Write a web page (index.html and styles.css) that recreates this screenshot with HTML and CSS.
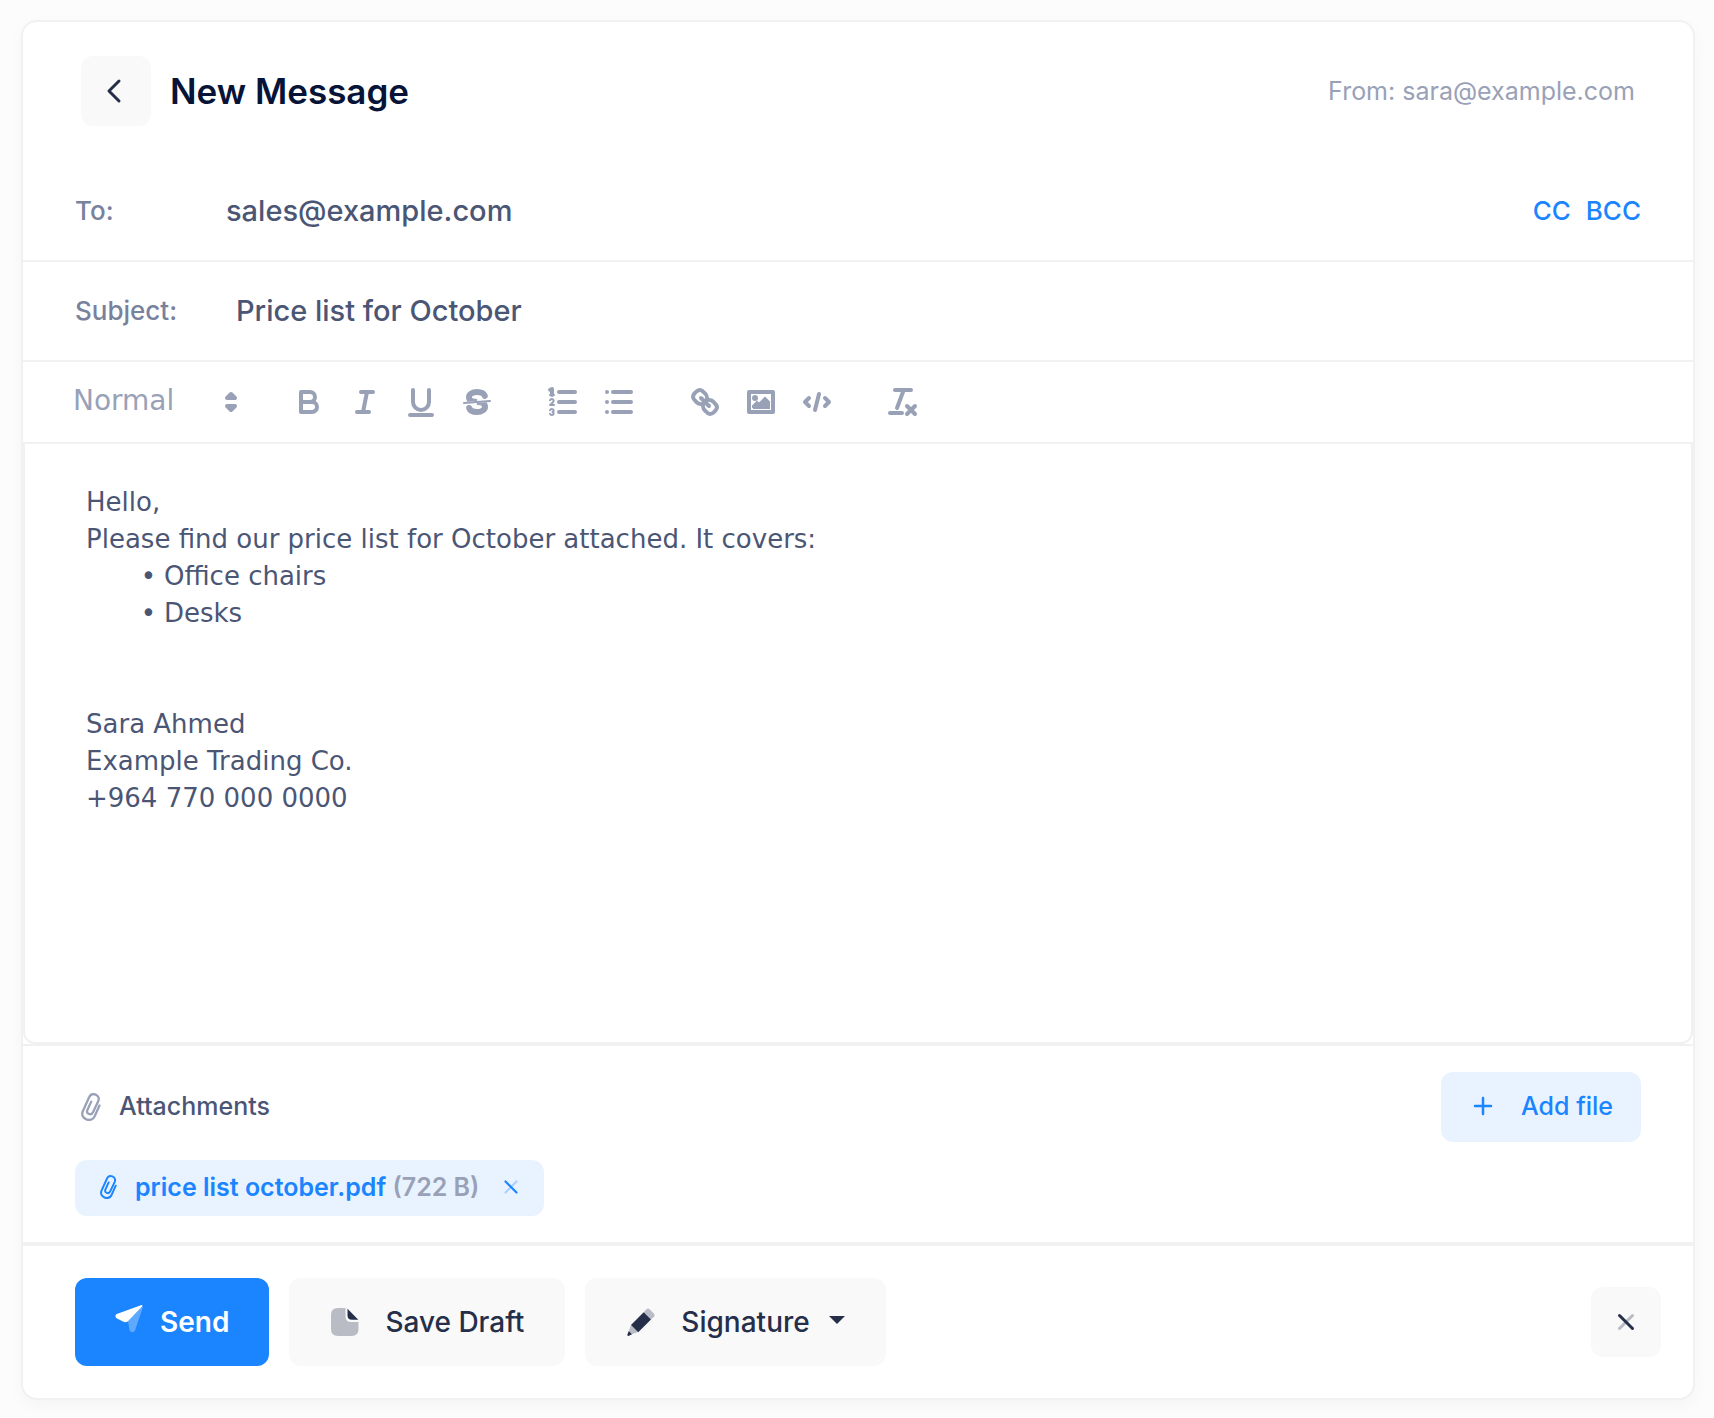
FILE: index.html
```html
<!DOCTYPE html>
<html lang="en">
<head>
<meta charset="utf-8">
<title>New Message</title>
<meta name="viewport" content="width=device-width, initial-scale=1">
<link rel="stylesheet" href="styles.css">
</head>
<body>
<svg class="sprite" aria-hidden="true">
  <symbol id="clip" viewBox="0 0 20 28">
    <g fill="none" stroke="currentColor" stroke-width="2.300" stroke-linecap="round" stroke-linejoin="round">
      <path d="M18.500 12.500 L13.800 23 C12.400 26.200 9 27.600 5.400 26.400 C1.600 25 .4 21.600 1.800 18.200 L8 4.600 C9.200 1.600 11.800 .5 14.600 1.600 C17.600 2.800 18.400 5.400 17.200 8.200 L12 19.200 C11.200 21 9.600 21.600 8 21 C6.200 20.300 5.600 18.900 6.300 17.200 L10.200 8.600"/>
    </g>
  </symbol>
</svg>
<form class="card">
  <header class="card-header">
    <button type="button" class="icon-btn" aria-label="Back">
      <svg width="32" height="32" viewBox="0 0 32 32"><path d="M19 6 L9 16 L19 26" fill="none" stroke="currentColor" stroke-width="3" stroke-linecap="round" stroke-linejoin="round"/></svg>
    </button>
    <h1 class="title">New Message</h1>
    <span class="from">From: sara@example.com</span>
  </header>

  <div class="field">
    <label class="field-label" for="to">To:</label>
    <input class="field-input" id="to" type="text" value="sales@example.com">
    <div class="copies"><a href="#cc">CC</a><a href="#bcc">BCC</a></div>
  </div>
  <div class="field">
    <label class="field-label" for="subject">Subject:</label>
    <input class="field-input field-input-padded" id="subject" type="text" value="Price list for October">
  </div>

  <div class="toolbar">
    <div class="picker">
      <select class="picker-select" aria-label="Text style"><option>Normal</option><option>Heading 1</option><option>Heading 2</option></select>
      <svg class="tool-icon picker-arrow" viewBox="0 0 18 18"><polygon class="stroke fill" points="7 11 9 13 11 11 7 11"/><polygon class="stroke fill" points="7 7 9 5 11 7 7 7"/></svg>
    </div>
    <div class="tools">
      <button type="button" class="tool" aria-label="Bold"><svg class="tool-icon" viewBox="0 0 18 18"><path class="stroke" d="M5,4H9.500A2.500,2.500,0,0,1,12,6.500v0A2.500,2.500,0,0,1,9.500,9H5A0,0,0,0,1,5,9V4A0,0,0,0,1,5,4Z"/><path class="stroke" d="M5,9h5.500A2.500,2.500,0,0,1,13,11.500v0A2.500,2.500,0,0,1,10.500,14H5a0,0,0,0,1,0,0V9A0,0,0,0,1,5,9Z"/></svg></button>
      <button type="button" class="tool" aria-label="Italic"><svg class="tool-icon" viewBox="0 0 18 18"><line class="stroke" x1="7" x2="13" y1="4" y2="4"/><line class="stroke" x1="5" x2="11" y1="14" y2="14"/><line class="stroke" x1="8" x2="10" y1="14" y2="4"/></svg></button>
      <button type="button" class="tool" aria-label="Underline"><svg class="tool-icon" viewBox="0 0 18 18"><path class="stroke" d="M5,3V9a4.012,4.012,0,0,0,4,4H9a4.012,4.012,0,0,0,4-4V3"/><rect class="fill" height="1" rx="0.500" ry="0.500" width="12" x="3" y="15"/></svg></button>
      <button type="button" class="tool" aria-label="Strikethrough"><svg class="tool-icon" viewBox="0 0 18 18"><line class="stroke thin" x1="15.500" x2="2.500" y1="8.500" y2="9.500"/><path class="fill" d="M9.007,8C6.542,7.791,6,7.519,6,6.500,6,5.792,7.283,5,9,5c1.571,0,2.765.679,2.969,1.309a1,1,0,0,0,1.900-.617C13.356,4.106,11.354,3,9,3,6.200,3,4,4.538,4,6.500a3.200,3.200,0,0,0,.5,1.843Z"/><path class="fill" d="M8.984,10C11.457,10.208,12,10.479,12,11.500c0,.708-1.283,1.500-3,1.500-1.571,0-2.765-.679-2.969-1.309a1,1,0,1,0-1.900.617C4.644,13.894,6.646,15,9,15c2.800,0,5-1.538,5-3.500a3.200,3.200,0,0,0-.5-1.843Z"/></svg></button>
    </div>
    <div class="tools">
      <button type="button" class="tool" aria-label="Numbered list"><svg class="tool-icon" viewBox="0 0 18 18"><line class="stroke" x1="7" x2="15" y1="4" y2="4"/><line class="stroke" x1="7" x2="15" y1="9" y2="9"/><line class="stroke" x1="7" x2="15" y1="14" y2="14"/><line class="stroke thin" x1="2.500" x2="4.500" y1="5.500" y2="5.500"/><path class="fill" d="M3.500,6A0.500,0.500,0,0,1,3,5.500V3.085l-0.276.138A0.500,0.500,0,0,1,2.053,3c-0.124-.247-0.023-0.324.224-0.447l1-.5A0.500,0.500,0,0,1,4,2.500v3A0.500,0.500,0,0,1,3.500,6Z"/><path class="stroke thin" d="M4.500,10.500h-2c0-.234,1.850-1.076,1.850-2.234A0.959,0.959,0,0,0,2.500,8.156"/><path class="stroke thin" d="M2.500,14.846a0.959,0.959,0,0,0,1.850-.109A0.700,0.700,0,0,0,3.750,14a0.688,0.688,0,0,0,.6-0.736,0.959,0.959,0,0,0-1.850-.109"/></svg></button>
      <button type="button" class="tool" aria-label="Bulleted list"><svg class="tool-icon" viewBox="0 0 18 18"><line class="stroke" x1="6" x2="15" y1="4" y2="4"/><line class="stroke" x1="6" x2="15" y1="9" y2="9"/><line class="stroke" x1="6" x2="15" y1="14" y2="14"/><line class="stroke" x1="3" x2="3" y1="4" y2="4"/><line class="stroke" x1="3" x2="3" y1="9" y2="9"/><line class="stroke" x1="3" x2="3" y1="14" y2="14"/></svg></button>
    </div>
    <div class="tools">
      <button type="button" class="tool" aria-label="Link"><svg class="tool-icon" viewBox="0 0 18 18"><line class="stroke" x1="7" x2="11" y1="7" y2="11"/><path class="stroke" d="M8.900,4.577a3.476,3.476,0,0,1,.36,4.679A3.476,3.476,0,0,1,4.577,8.900C3.185,7.500,2.035,6.400,4.217,4.217S7.500,3.185,8.900,4.577Z"/><path class="stroke" d="M13.423,9.100a3.476,3.476,0,0,0-4.679-.36,3.476,3.476,0,0,0,.36,4.679c1.392,1.392,2.500,2.542,4.679.36S14.815,10.500,13.423,9.100Z"/></svg></button>
      <button type="button" class="tool" aria-label="Image"><svg class="tool-icon" viewBox="0 0 18 18"><rect class="stroke" height="10" width="12" x="3" y="4"/><circle class="fill" cx="6" cy="7" r="1"/><polyline class="fill" points="5 12 5 11 7 9 8 10 11 7 13 9 13 12 5 12"/></svg></button>
      <button type="button" class="tool" aria-label="Code"><svg class="tool-icon" viewBox="0 0 18 18"><polyline class="stroke" points="5 7 3 9 5 11"/><polyline class="stroke" points="13 7 15 9 13 11"/><line class="stroke" x1="10" x2="8" y1="5" y2="13"/></svg></button>
    </div>
    <div class="tools">
      <button type="button" class="tool" aria-label="Clear formatting"><svg class="tool-icon" viewBox="0 0 18 18"><line class="stroke" x1="5" x2="13" y1="3" y2="3"/><line class="stroke" x1="6" x2="9.350" y1="12" y2="3"/><line class="stroke" x1="11" x2="15" y1="11" y2="15"/><line class="stroke" x1="15" x2="11" y1="11" y2="15"/><rect class="fill" height="1" rx="0.500" ry="0.500" width="7" x="2" y="14"/></svg></button>
    </div>
  </div>

  <div class="editor" contenteditable="true" spellcheck="false" role="textbox" aria-label="Message">
    <p>Hello,</p>
    <p>Please find our price list for October attached. It covers:</p>
    <ul><li>Office chairs</li><li>Desks</li></ul>
    <p><br></p>
    <p><br></p>
    <p>Sara Ahmed</p>
    <p>Example Trading Co.</p>
    <p>+964 770 000 0000</p>
  </div>

  <section class="attachments">
    <div class="attachments-head">
      <svg class="head-clip" width="20" height="28"><use href="#clip"/></svg>
      <h2 class="attachments-title">Attachments</h2>
      <button type="button" class="add-btn">
        <svg width="20" height="20" viewBox="0 0 20 20"><path d="M10 2V18M2 10H18" fill="none" stroke="currentColor" stroke-width="2.500" stroke-linecap="round"/></svg>
        Add file
      </button>
    </div>
    <div class="chip">
      <svg width="17" height="24"><use href="#clip"/></svg>
      <span class="chip-name">price list october.pdf <span class="chip-size">(722 B)</span></span>
      <button type="button" class="chip-remove" aria-label="Remove attachment">
        <svg width="14" height="14" viewBox="0 0 14 14" fill="none" stroke="currentColor" stroke-width="2.200" stroke-linecap="round"><path d="M12.500 1.500L1.500 12.500" opacity=".3"/><path d="M1.500 1.500L12.500 12.500"/></svg>
      </button>
    </div>
  </section>

  <footer class="card-footer">
    <button type="submit" class="btn btn-primary">
      <svg class="send-icon" width="29" height="29" viewBox="0 0 29 29" fill="currentColor"><path opacity=".3" d="M28 2.800L20.200 26Q19.300 28.300 17.300 28.300Q15.200 28.300 14.500 26L13 17.200L27.300 2.300Z"/><path d="M26.500 1L1.800 10Q0 10.800.5 12.800Q.8 14 2 14.500L8 17.600Q11 19.300 13 17.200L27.300 2.300Q27.600.6 26.500 1Z"/></svg>
      Send
    </button>
    <button type="button" class="btn btn-light">
      <svg width="28" height="28" viewBox="0 0 28 28" fill="currentColor"><path opacity=".3" d="M7 0H14.500V8Q14.500 14 20 14H27.500V21Q27.500 28 20.500 28H7Q0 28 0 21V7Q0 0 7 0Z"/><path d="M16.500.7L27.300 11.700H21Q16.500 11.700 16.500 7.500Z"/></svg>
      Save Draft
    </button>
    <button type="button" class="btn btn-light btn-menu">
      <svg width="28" height="28" viewBox="0 0 28 28" fill="currentColor"><path opacity=".3" d="M16.700 4.300L19.500 1.300Q21-.2 22.600 1.300L27 5.800Q28.300 7.300 27 8.700L24 11.500ZM4 17L11 24L5 26.300L1.800 23Z"/><path d="M16.700 4.300L24 11.500L11.200 24.300L4 17ZM1.800 23L5 26.300L1.500 27.900Q-.1 28 .4 26.500Z"/></svg>
      Signature
      <span class="caret"></span>
    </button>
    <button type="button" class="icon-btn discard" aria-label="Discard">
      <svg width="18" height="18" viewBox="0 0 18 18" fill="none" stroke="currentColor" stroke-width="3" stroke-linecap="round"><path d="M15.500 2.500L2.500 15.500" opacity=".3"/><path d="M2.500 2.500L15.500 15.500"/></svg>
    </button>
  </footer>
</form>
</body>
</html>
```
FILE: styles.css
```css
:root {
  --line: #f1f1f2;
  --blue: #1b84ff;
  --blue-light: #e9f3ff;
  --muted: #99a1b7;
  --text: #4b5675;
  --dark: #252f4a;
  --light: #f9f9f9;
}

* { box-sizing: border-box; }

body {
  margin: 0;
  padding: 20px 19px 18px 21px;
  background: #fcfcfc;
  color: var(--text);
  font-family: Inter, "Liberation Sans", sans-serif;
  font-size: 26px;
  line-height: 36px;
}

h1, h2, p, ul { margin: 0; padding: 0; }
a { color: inherit; text-decoration: none; }
svg { display: block; flex: none; }
button, input, select { font: inherit; color: inherit; margin: 0; border: 0; padding: 0; background: none; }
button { cursor: pointer; }

.sprite { position: absolute; width: 0; height: 0; }

.card {
  background: #fff;
  border: 2px solid var(--line);
  border-radius: 16px;
  box-shadow: 0 6px 16px rgba(0, 0, 0, .03);
}

.card-header {
  display: flex;
  align-items: center;
  padding: 34px 58px 36px;
}

.icon-btn {
  display: flex;
  align-items: center;
  justify-content: center;
  width: 70px;
  height: 70px;
  border-radius: 12px;
  background: var(--light);
  color: var(--dark);
}

.title {
  margin-left: 19px;
  color: #071437;
  font-size: 35px;
  font-weight: 600;
}

.from {
  margin-left: auto;
  color: var(--muted);
  font-size: 25px;
}

.field {
  display: flex;
  align-items: center;
  height: 100px;
  padding: 0 52px;
  border-bottom: 2px solid var(--line);
}

.field-label {
  width: 151px;
  color: #78829d;
  font-weight: 500;
}

.field-input {
  flex: 1;
  min-width: 0;
  font-size: 29px;
  font-weight: 500;
  outline: 0;
}

.field-input-padded { padding-left: 10px; }

.copies {
  display: flex;
  gap: 15px;
  color: var(--blue);
  font-weight: 500;
}

.toolbar {
  display: flex;
  align-items: center;
  gap: 30px;
  height: 82px;
  padding: 0 32px;
  border-bottom: 2px solid var(--line);
  color: var(--muted);
}

.picker { position: relative; width: 196px; }

.picker-select {
  display: block;
  width: 100%;
  padding: 0 0 2px 18px;
  appearance: none;
  font-family: "DejaVu Sans", sans-serif;
  font-size: 28px;
  line-height: 34px;
  outline: 0;
}

.picker-arrow {
  position: absolute;
  top: 0;
  right: 2px;
  pointer-events: none;
}

.tools { display: flex; }
.tool { padding: 6px 10px; }
.tool-icon { width: 36px; height: 36px; }
.fill { fill: currentColor; stroke: currentColor; stroke-width: 1; }
.stroke { stroke: currentColor; stroke-width: 2; stroke-linecap: round; stroke-linejoin: round; }
.stroke:not(.fill) { fill: none; }
.thin { stroke-width: 1; }

.editor {
  min-height: 600px;
  padding: 40px 61px;
  border: solid var(--line);
  border-width: 0 2px 2px;
  border-radius: 0 0 12px 12px;
  font-family: "DejaVu Sans", sans-serif;
  line-height: 37px;
  outline: 0;
}

.editor ul { padding-left: 78px; list-style: none; }

.editor li::before {
  content: "•";
  display: inline-block;
  width: 32px;
  margin-left: -40px;
  margin-right: 8px;
  text-align: right;
}

.attachments {
  padding: 26px 52px;
  border-top: 2px solid var(--line);
}

.attachments-head {
  display: flex;
  align-items: center;
  margin-bottom: 18px;
}

.head-clip { margin: 0 18px 0 6px; color: var(--muted); }

.attachments-title {
  padding-bottom: 2px;
  font-size: 25px;
  font-weight: 500;
}

.add-btn {
  display: flex;
  align-items: center;
  gap: 28px;
  height: 70px;
  margin-left: auto;
  padding: 0 28px 2px 32px;
  border-radius: 12px;
  background: var(--blue-light);
  color: var(--blue);
  font-size: 25px;
  font-weight: 500;
}

.chip {
  display: inline-flex;
  align-items: center;
  height: 56px;
  padding: 0 26px 2px 25px;
  border-radius: 12px;
  background: var(--blue-light);
  color: var(--blue);
  font-size: 25px;
  font-weight: 600;
  vertical-align: top;
}

.chip-name { margin-left: 18px; }
.chip-size { color: var(--muted); }
.chip-remove { margin-left: 25px; }

.card-footer {
  display: flex;
  align-items: center;
  gap: 20px;
  padding: 32px 32px 32px 52px;
  border-top: 4px solid var(--line);
}

.btn {
  display: flex;
  align-items: center;
  height: 88px;
  padding: 0 40px;
  border-radius: 12px;
  font-size: 28px;
  font-weight: 500;
}

.btn-primary { gap: 16px; background: var(--blue); color: #fff; font-weight: 600; }
.btn-light { gap: 26px; padding: 0 41px 0 42px; background: var(--light); color: var(--dark); }
.send-icon { margin-bottom: 8px; }

.caret {
  margin: 0 0 4px -7px;
  border: 8px solid transparent;
  border-top-color: currentColor;
  border-bottom: 0;
}

.discard { margin-left: auto; }
```
